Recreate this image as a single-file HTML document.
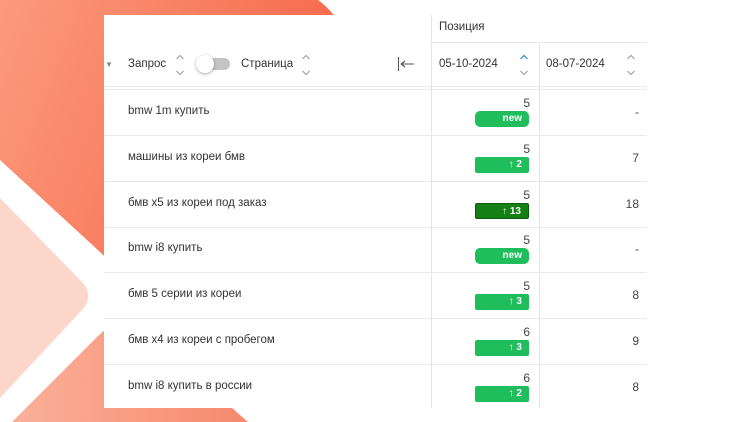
<!DOCTYPE html>
<html><head><meta charset="utf-8"><style>
*{margin:0;padding:0;box-sizing:border-box}
body{width:751px;height:422px;overflow:hidden;background:#fff;position:relative;font-family:"Liberation Sans",sans-serif;color:#333;font-size:11.5px}
svg.bg{position:absolute;left:0;top:0}
.card{position:absolute;left:104px;top:15px;width:543px;height:393px;background:#fff}
.abs{position:absolute}
.vl{position:absolute;width:1px;background:#dbe6ef}
.hl{position:absolute;height:1px;background:#e6eaee}
.q{position:absolute;left:24px}
.num{position:absolute;right:117px;font-size:12px;color:#444}
.badge{position:absolute;left:371px;width:54px;height:16px;background:#1fbd5c;border-radius:2px;color:#fff;font-size:10px;font-weight:bold;text-align:right;padding-right:7px;line-height:16px}
.badge.n{border-radius:5px}
.badge.d{background:#137f14;border:1px solid #0c5e0c}
.p2{position:absolute;right:8px;font-size:12px;color:#444}
svg.arr{position:absolute}
</style></head><body>
<svg class="bg" width="751" height="422">
<defs>
<linearGradient id="g1" x1="0" y1="0" x2="1" y2="0.3"><stop offset="0" stop-color="#fc9a7c"/><stop offset="1" stop-color="#f6674a"/></linearGradient>
<linearGradient id="g3" x1="0" y1="0" x2="1" y2="0"><stop offset="0" stop-color="#fbb09a"/><stop offset="1" stop-color="#f6896c"/></linearGradient>
</defs>
<path d="M0 0 H318 Q330 8 345 30 L345 270 L120 270 Q110 262 100 252 L0 160 Z" fill="url(#g1)"/>
<path d="M0 198 L82 282 Q95 296 82 310 L0 398 Z" fill="#fcd6cb"/>
<path d="M12 422 L100 334 Q108 326 116 330 L232 408 L248 422 Z" fill="url(#g3)"/>
</svg>
<div class="card">
  <div class="vl" style="left:327px;top:0;height:393px"></div>
  <div class="vl" style="left:435px;top:27px;height:366px"></div>
  <div class="hl" style="left:327px;top:27px;width:216px"></div>
  <div class="hl" style="left:0;top:71px;width:543px"></div>
  <div class="hl" style="left:0;top:74px;width:543px"></div>
  <div class="abs" style="left:335px;top:6px;font-size:11.5px;color:#333">Позиция</div>
  <div class="abs" style="left:1px;top:45px;font-size:8px;color:#888">▼</div>
  <div class="abs" style="left:24px;top:43px">Запрос</div>
  <svg class="arr" style="left:71px;top:38px" width="10" height="24"><path d="M1.5 6 L5 2.5 L8.5 6 M1.5 18 L5 21.5 L8.5 18" fill="none" stroke="#999" stroke-width="1"/></svg>
  <div class="abs" style="left:96px;top:43px;width:30px;height:12px;border-radius:6px;background:#c4c4c4"></div>
  <div class="abs" style="left:92px;top:40px;width:18px;height:18px;border-radius:9px;background:#fff;box-shadow:0 1px 3px rgba(0,0,0,.35)"></div>
  <div class="abs" style="left:137px;top:43px">Страница</div>
  <svg class="arr" style="left:197px;top:38px" width="10" height="24"><path d="M1.5 6 L5 2.5 L8.5 6 M1.5 18 L5 21.5 L8.5 18" fill="none" stroke="#999" stroke-width="1"/></svg>
  <svg class="arr" style="left:293px;top:42px" width="18" height="14"><path d="M1.5 0 V14 M4 7 H17 M4 7 L8 4 M4 7 L8 10" fill="none" stroke="#555" stroke-width="1.1"/></svg>
  <div class="abs" style="left:335px;top:43px">05-10-2024</div>
  <svg class="arr" style="left:415px;top:38px" width="10" height="24"><path d="M1.5 6 L5 2.5 L8.5 6" fill="none" stroke="#2a8fd0" stroke-width="1.2"/><path d="M1.5 18 L5 21.5 L8.5 18" fill="none" stroke="#999" stroke-width="1"/></svg>
  <div class="abs" style="left:442px;top:43px">08-07-2024</div>
  <svg class="arr" style="left:522px;top:38px" width="10" height="24"><path d="M1.5 6 L5 2.5 L8.5 6 M1.5 18 L5 21.5 L8.5 18" fill="none" stroke="#999" stroke-width="1"/></svg>

  <div class="hl" style="left:0;top:120px;width:543px"></div>
  <div class="hl" style="left:0;top:166px;width:543px"></div>
  <div class="hl" style="left:0;top:212px;width:543px"></div>
  <div class="hl" style="left:0;top:257px;width:543px"></div>
  <div class="hl" style="left:0;top:303px;width:543px"></div>
  <div class="hl" style="left:0;top:349px;width:543px"></div>

  <div class="q" style="top:90px">bmw 1m купить</div>
  <div class="num" style="top:81px">5</div><div class="badge n" style="top:96px">new</div><div class="p2" style="top:90px">-</div>

  <div class="q" style="top:136px">машины из кореи бмв</div>
  <div class="num" style="top:127px">5</div><div class="badge" style="top:142px">↑ 2</div><div class="p2" style="top:136px">7</div>

  <div class="q" style="top:182px">бмв x5 из кореи под заказ</div>
  <div class="num" style="top:173px">5</div><div class="badge d" style="top:188px">↑ 13</div><div class="p2" style="top:182px">18</div>

  <div class="q" style="top:227px">bmw i8 купить</div>
  <div class="num" style="top:218px">5</div><div class="badge n" style="top:233px">new</div><div class="p2" style="top:227px">-</div>

  <div class="q" style="top:273px">бмв 5 серии из кореи</div>
  <div class="num" style="top:264px">5</div><div class="badge" style="top:279px">↑ 3</div><div class="p2" style="top:273px">8</div>

  <div class="q" style="top:319px">бмв x4 из кореи с пробегом</div>
  <div class="num" style="top:310px">6</div><div class="badge" style="top:325px">↑ 3</div><div class="p2" style="top:319px">9</div>

  <div class="q" style="top:365px">bmw i8 купить в россии</div>
  <div class="num" style="top:356px">6</div><div class="badge" style="top:371px">↑ 2</div><div class="p2" style="top:365px">8</div>
</div>
</body></html>
